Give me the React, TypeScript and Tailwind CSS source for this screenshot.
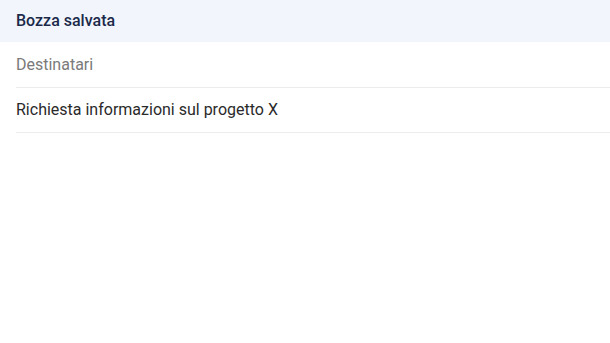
export default function App() {
  return (
    <div className="w-[610px] h-[343px] bg-white" style={{ fontFamily: "Roboto, 'Noto Sans', sans-serif" }}>
      <div className="h-[42px] bg-[#f2f6fc] flex items-center px-4 text-[16px] font-medium text-[#1b2a4a]">
        Bozza salvata
      </div>
      <div className="ml-4">
        <div className="h-[46px] flex items-center border-b border-[#ececec] text-[16px] text-[#7a7a7a]">
          Destinatari
        </div>
        <div className="h-[45px] flex items-center border-b border-[#ececec] text-[16px] text-[#2a2a2a]">
          Richiesta informazioni sul progetto X
        </div>
      </div>
    </div>
  );
}
